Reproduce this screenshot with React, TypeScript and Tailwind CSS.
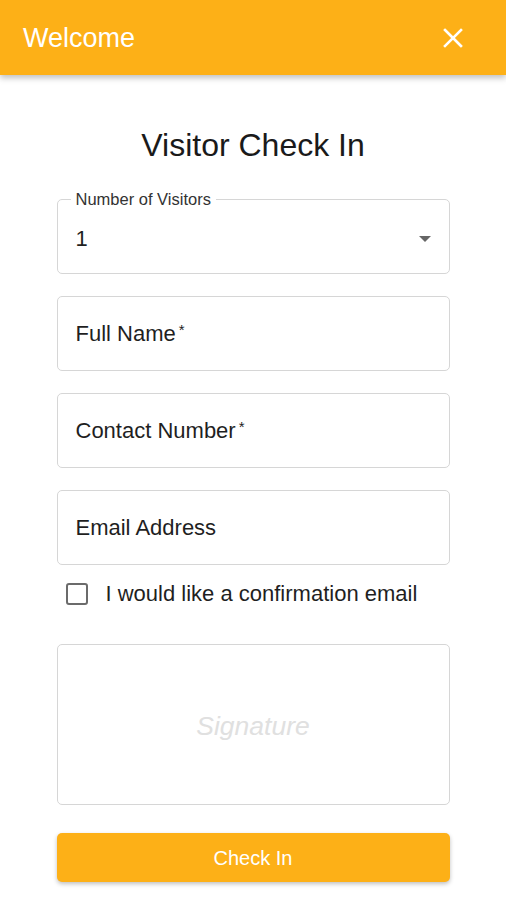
import React from 'react';

const font = { fontFamily: '"Liberation Sans", Arial, sans-serif' };

const TextField: React.FC<{ label: string; required?: boolean }> = ({ label, required }) => (
  <div className="h-[75px] rounded-[5px] border border-[#d6d6d6] flex items-center px-[18px]">
    <span className="text-[22px] text-[#1f1f1f]">
      {label}
      {required && <span className="text-[15px] align-[6px] ml-[3px]">*</span>}
    </span>
  </div>
);

export default function App() {
  return (
    <div className="min-h-[900px] bg-white" style={font}>
      <header className="h-[75px] bg-[#fdb017] flex items-center justify-between pl-[23px] pr-[42px] shadow-[0_3px_6px_rgba(0,0,0,0.25)] relative">
        <h1 className="text-[27px] text-white pt-[2px]">Welcome</h1>
        <svg width="22" height="22" viewBox="0 0 22 22" className="text-white">
          <path d="M3 3L19 19M19 3L3 19" stroke="currentColor" strokeWidth="2.6" strokeLinecap="square" />
        </svg>
      </header>

      <main className="w-[393px] mx-auto pt-[51px]">
        <h2 className="text-center text-[32px] text-[#1a1a1a] leading-[38px]">Visitor Check In</h2>

        <div className="mt-[35px] flex flex-col gap-[22px]">
          <div className="relative h-[75px] rounded-[5px] border border-[#d6d6d6] flex items-center justify-between pl-[18px] pr-[18px] pt-[4px]">
            <span className="absolute -top-[10px] left-[13px] bg-white px-[5px] text-[16.5px] leading-[18px] text-[#333]">
              Number of Visitors
            </span>
            <span className="text-[22px] text-[#1f1f1f]">1</span>
            <svg width="12" height="6" viewBox="0 0 12 6">
              <path d="M0 0H12L6 6Z" fill="#666" />
            </svg>
          </div>
          <TextField label="Full Name" required />
          <TextField label="Contact Number" required />
          <TextField label="Email Address" />
        </div>

        <label className="flex items-center mt-[17px] pl-[9px] gap-[18px]">
          <span className="w-[22px] h-[22px] rounded-[3px] border-2 border-[#6b6b6b]" />
          <span className="text-[22px] leading-[24px] text-[#1f1f1f]">I would like a confirmation email</span>
        </label>

        <div className="mt-[38px] h-[161px] rounded-[5px] border border-[#d6d6d6] flex items-center justify-center pt-[4px]">
          <span className="italic text-[26.5px] text-[#e0e0e0]">Signature</span>
        </div>

        <button className="mt-[28px] w-full h-[49px] rounded-[5px] bg-[#fdb017] text-white text-[20px] shadow-[0_2px_4px_rgba(0,0,0,0.25)]">
          Check In
        </button>
      </main>
    </div>
  );
}
